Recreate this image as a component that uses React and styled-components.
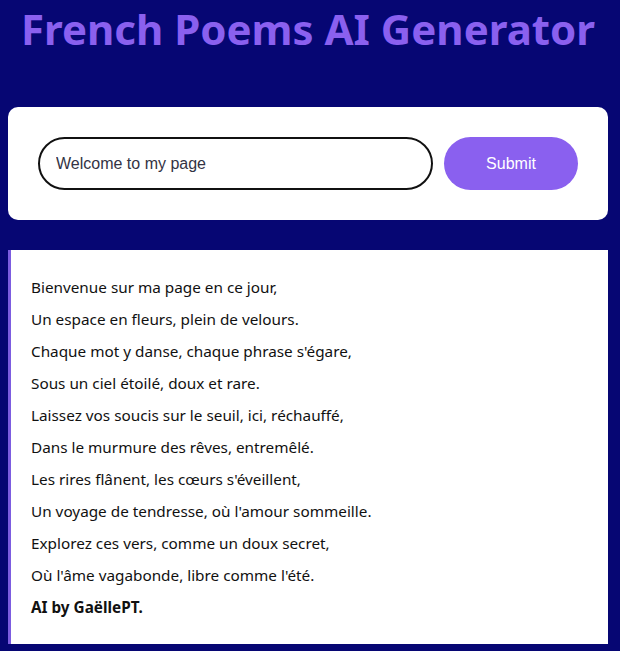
import React, { useState } from 'react';
import styled, { createGlobalStyle } from 'styled-components';

const GlobalStyle = createGlobalStyle`
  body {
    margin: 8px;
    background-color: #060673;
    font-family: "Noto Sans", "DejaVu Sans", sans-serif;
  }
`;

const Container = styled.div`
  width: 600px;
`;

const Title = styled.h1`
  margin: 0;
  height: 99px;
  text-align: center;
  color: #8a60ef;
  font-size: 42px;
  line-height: 42px;
  font-weight: bold;
`;

const FormCard = styled.form`
  display: flex;
  align-items: center;
  gap: 11px;
  background: #ffffff;
  border-radius: 10px;
  padding: 30px;
  margin-bottom: 30px;
`;

const Input = styled.input`
  box-sizing: border-box;
  width: 395px;
  height: 53px;
  border: 2px solid #111111;
  border-radius: 27px;
  padding: 0 16px;
  font-family: "Liberation Sans", Arial, sans-serif;
  font-size: 16px;
  color: #333344;
  outline: none;
`;

const Button = styled.button`
  width: 134px;
  height: 53px;
  border: none;
  border-radius: 27px;
  background: #8a60ef;
  color: #ffffff;
  font-family: "Liberation Sans", Arial, sans-serif;
  font-size: 16px;
  cursor: pointer;
`;

const Poem = styled.div`
  background: #ffffff;
  border-left: 3px solid #7c5ce0;
  padding: 21px 20px;
  font-size: 15.3px;
  line-height: 32px;
  color: #111111;
`;

const Signature = styled.strong`
  font-weight: bold;
`;

const lines = [
  'Bienvenue sur ma page en ce jour,',
  'Un espace en fleurs, plein de velours.',
  "Chaque mot y danse, chaque phrase s'égare,",
  'Sous un ciel étoilé, doux et rare.',
  'Laissez vos soucis sur le seuil, ici, réchauffé,',
  'Dans le murmure des rêves, entremêlé.',
  "Les rires flânent, les cœurs s'éveillent,",
  "Un voyage de tendresse, où l'amour sommeille.",
  'Explorez ces vers, comme un doux secret,',
  "Où l'âme vagabonde, libre comme l'été.",
];

export default function App() {
  const [value, setValue] = useState('Welcome to my page');

  return (
    <Container>
      <GlobalStyle />
      <Title>French Poems AI Generator</Title>
      <FormCard onSubmit={(e) => e.preventDefault()}>
        <Input value={value} onChange={(e) => setValue(e.target.value)} />
        <Button type="submit">Submit</Button>
      </FormCard>
      <Poem>
        {lines.map((line) => (
          <div key={line}>{line}</div>
        ))}
        <Signature>AI by GaëllePT.</Signature>
      </Poem>
    </Container>
  );
}
